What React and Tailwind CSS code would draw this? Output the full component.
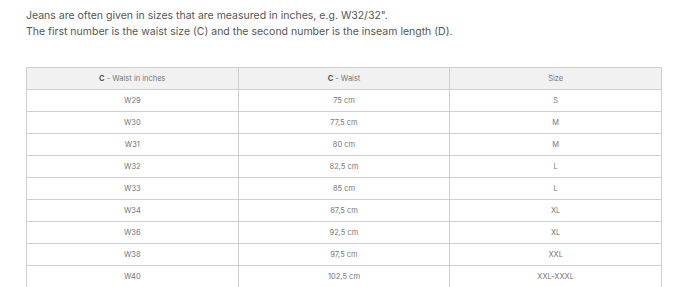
const rows = [
  ["W29", "75 cm", "S"],
  ["W30", "77,5 cm", "M"],
  ["W31", "80 cm", "M"],
  ["W32", "82,5 cm", "L"],
  ["W33", "85 cm", "L"],
  ["W34", "87,5 cm", "XL"],
  ["W36", "92,5 cm", "XL"],
  ["W38", "97,5 cm", "XXL"],
  ["W40", "102,5 cm", "XXL-XXXL"],
];

export default function App() {
  return (
    <div className="bg-white h-[287px] overflow-hidden pl-[26px] pt-[8px] font-['Inter',sans-serif]">
      <p className="text-[10.5px] leading-[16px] text-[#555]">
        Jeans are often given in sizes that are measured in inches, e.g. W32/32".
        <br />
        The first number is the waist size (C) and the second number is the inseam length (D).
      </p>

      <table className="mt-[27px] w-[636px] border-collapse text-[7.5px] text-[#777] text-center">
        <thead>
          <tr className="bg-[#f1f1f1]">
            <th className="border border-[#cfcfcf] h-[22px] font-normal">
              <b className="font-bold text-[#555]">C</b> - Waist in inches
            </th>
            <th className="border border-[#cfcfcf] h-[22px] font-normal">
              <b className="font-bold text-[#555]">C</b> - Waist
            </th>
            <th className="border border-[#cfcfcf] h-[22px] font-normal">Size</th>
          </tr>
        </thead>
        <tbody>
          {rows.map((r) => (
            <tr key={r[0]}>
              {r.map((c, i) => (
                <td key={i} className="border border-[#cfcfcf] h-[22px] w-1/3">
                  {c}
                </td>
              ))}
            </tr>
          ))}
        </tbody>
      </table>
    </div>
  );
}
